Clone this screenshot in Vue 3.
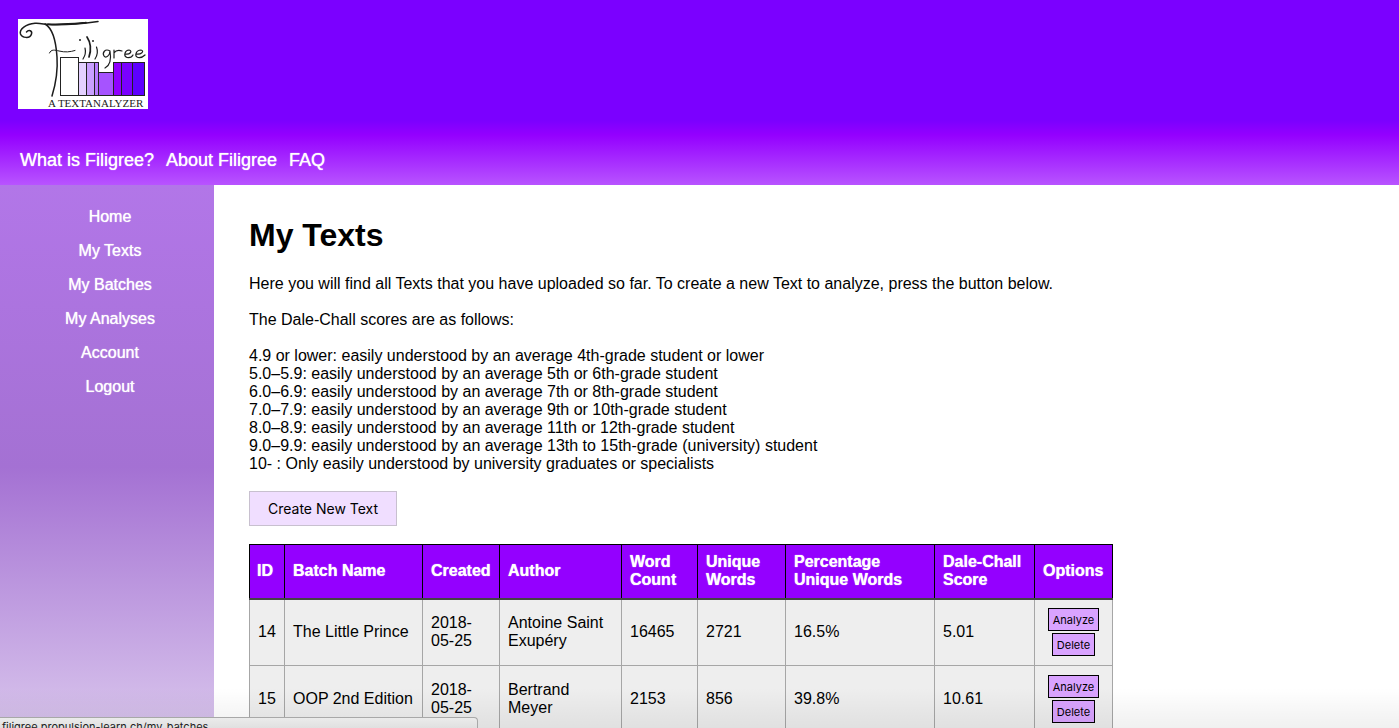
<script setup>
const topLinks = ['What is Filigree?', 'About Filigree', 'FAQ']
const sideLinks = ['Home', 'My Texts', 'My Batches', 'My Analyses', 'Account', 'Logout']
const scores = [
  '4.9 or lower: easily understood by an average 4th-grade student or lower',
  '5.0–5.9: easily understood by an average 5th or 6th-grade student',
  '6.0–6.9: easily understood by an average 7th or 8th-grade student',
  '7.0–7.9: easily understood by an average 9th or 10th-grade student',
  '8.0–8.9: easily understood by an average 11th or 12th-grade student',
  '9.0–9.9: easily understood by an average 13th to 15th-grade (university) student',
  '10- : Only easily understood by university graduates or specialists',
]
const columns = [
  { key: 'id', label: 'ID' },
  { key: 'name', label: 'Batch Name' },
  { key: 'created', label: 'Created' },
  { key: 'author', label: 'Author' },
  { key: 'words', label: 'Word Count' },
  { key: 'unique', label: 'Unique Words' },
  { key: 'percent', label: 'Percentage Unique Words' },
  { key: 'score', label: 'Dale-Chall Score' },
]
const texts = [
  { id: 14, name: 'The Little Prince', created: '2018-05-25', author: 'Antoine Saint Exupéry', words: 16465, unique: 2721, percent: '16.5%', score: '5.01' },
  { id: 15, name: 'OOP 2nd Edition', created: '2018-05-25', author: 'Bertrand Meyer', words: 2153, unique: 856, percent: '39.8%', score: '10.61' },
]
</script>

<template>
  <div class="page">
    <header class="banner">
      <a class="logo" href="#" aria-label="Filigree">
        <svg viewBox="0 0 130 90" width="130" height="90">
          <rect width="130" height="90" fill="#fff" />
          <g stroke="#222" stroke-width="1">
            <rect x="42.500" y="38.500" width="18" height="38" fill="#fff" />
            <rect x="60.500" y="43.500" width="8" height="33" fill="#e3d0ff" />
            <rect x="68.500" y="43.500" width="8" height="33" fill="#c9a0ff" />
            <rect x="76.500" y="43.500" width="4" height="33" fill="#b77cff" />
            <rect x="80.500" y="53.500" width="15" height="23" fill="#a653ff" />
            <rect x="95.500" y="43.500" width="8" height="33" fill="#8f00ff" />
            <rect x="103.500" y="43.500" width="11" height="33" fill="#7a00ff" />
            <rect x="114.500" y="43.500" width="12" height="33" fill="#5d00ff" />
          </g>
          <g fill="none" stroke="#1c1c1c" stroke-width="1.200" stroke-linecap="round" stroke-linejoin="round">
            <path d="M8.500 13C11 10 14.500 12 13.500 15C12 20 4 19 2.500 15C1 10 8 5 17 4.300C22 4 25 5 30 5.500C45 6.500 62 5 80 2.500" stroke-width="1.500" />
            <path d="M27 5C34 9 38 22 39 38C40 52 38 64 34 77" stroke-width="1.500" />
            <path d="M30 5.200C45 6 58 4.500 68 3.600" stroke-width="1.800" />
            <path d="M31.500 34C33 30 37 31 41 32C47 33.500 52 33 57 31.500" stroke-width="1" />
            <path d="M67 29C68 33 67 37 65 40" />
            <path d="M69 18C73 24 73 32 71 38" stroke-width="1.700" />
            <path d="M78.500 28C80 32 79 37 77 40" />
            <path d="M92 32C87 29 84 34 86 37C88 40 92 36 92 32C93 38 93 46 87 49" />
            <path d="M96 31V39M96 34C98 31 101 31 104 32" />
            <path d="M107 35C112 36 115 32 111 31C107 31 105 37 109 38.500C112 39 114 38 115 36" />
            <path d="M118 35C123 36 127 32 123 31C118 31 116 37 120 38.500C123 39 125 38 127 36" />
          </g>
          <g fill="#222"><circle cx="62" cy="21" r="1" /><circle cx="75" cy="22" r="1" /></g>
          <text x="30" y="88" font-family="Liberation Serif, serif" font-size="11" fill="#222">A TEXTANALYZER</text>
        </svg>
      </a>
      <nav class="top-nav">
        <a v-for="link in topLinks" :key="link" href="#">{{ link }}</a>
      </nav>
    </header>

    <div class="body">
      <nav class="side-nav">
        <a v-for="link in sideLinks" :key="link" href="#">{{ link }}</a>
      </nav>

      <main class="content">
        <h1>My Texts</h1>
        <p>Here you will find all Texts that you have uploaded so far. To create a new Text to analyze, press the button below.</p>
        <p>The Dale-Chall scores are as follows:</p>
        <ul class="scores">
          <li v-for="score in scores" :key="score">{{ score }}</li>
        </ul>
        <button class="create" type="button">Create New Text</button>

        <table>
          <thead>
            <tr>
              <th v-for="col in columns" :key="col.key" :class="col.key" scope="col">{{ col.label }}</th>
              <th class="options" scope="col">Options</th>
            </tr>
          </thead>
          <tbody>
            <tr v-for="row in texts" :key="row.id">
              <td v-for="col in columns" :key="col.key" :class="col.key">{{ row[col.key] }}</td>
              <td class="options">
                <div class="actions">
                  <button type="button">Analyze</button>
                  <button type="button">Delete</button>
                </div>
              </td>
            </tr>
          </tbody>
        </table>
      </main>
    </div>

    <div class="fade"></div>
    <div class="status">filigree.propulsion-learn.ch/my_batches</div>
  </div>
</template>

<style>
body {
  margin: 0;
}
</style>

<style scoped>
.page {
  position: relative;
  display: flex;
  flex-direction: column;
  height: 100vh;
  overflow: hidden;
  background: #fff;
  color: #000;
  font: 16px/18px "Liberation Sans", Arial, sans-serif;
}
.banner {
  flex: none;
  padding: 19px 18px 14px;
  background: linear-gradient(#7b00ff 0, #7b00ff 65%, #9400ff 73%, #b854ff 100%);
}
.logo {
  display: block;
  width: 130px;
}
.logo svg {
  display: block;
}
.top-nav {
  display: flex;
  gap: 12px;
  padding: 40px 2px 0;
  font-size: 18px;
  line-height: 22px;
}
.top-nav a,
.side-nav a {
  color: #fff;
  text-decoration: none;
  text-shadow: 0 0 1px #fff;
}
.body {
  flex: 1;
  display: flex;
  min-height: 0;
}
.side-nav {
  flex: none;
  box-sizing: border-box;
  width: 214px;
  display: flex;
  flex-direction: column;
  align-items: center;
  gap: 16px;
  padding: 23px 0 0 6px;
  background: linear-gradient(#b276e8 0, #a471d3 52%, #d8c4ec 100%);
}
.content {
  flex: 1;
  min-width: 0;
  padding: 32px 35px 0;
}
h1 {
  margin: 0 0 22px;
  font-size: 32px;
  line-height: 36px;
}
p {
  margin: 0 0 18px;
}
.scores {
  margin: 0 0 18px;
  padding: 0;
  list-style: none;
}
button {
  color: #000;
  font-family: Inter, sans-serif;
}
.create {
  display: block;
  height: 35px;
  margin-bottom: 18px;
  padding: 0 18px;
  border: 1px solid #c8c0cf;
  background: #f0deff;
  font-size: 14px;
}
table {
  width: 863px;
  table-layout: fixed;
  border-collapse: collapse;
}
th,
td {
  box-sizing: border-box;
  padding: 0 8px;
  text-align: left;
  vertical-align: middle;
}
th {
  height: 54px;
  border: 1px solid #000;
  border-bottom: 2px solid #444;
  background: #9400ff;
  color: #fff;
  text-shadow: 0 0 1px #fff;
}
td {
  height: 67px;
  border: 1px solid #a6a6a6;
  background: #eee;
}
.id { width: 35px; text-align: center; }
th.id { padding: 0; padding-right: 4px; }
.name { width: 138px; }
.created { width: 77px; }
.author { width: 122px; }
.words { width: 76px; }
.unique { width: 88px; }
.percent { width: 149px; }
.score { width: 100px; }
.options { width: 78px; }
.actions {
  display: flex;
  flex-direction: column;
  align-items: center;
  gap: 2px;
}
.actions button {
  height: 23px;
  padding: 0 4px;
  border: 1px solid #000;
  background: #d9a3ff;
  font-size: 11px;
}
.fade {
  position: absolute;
  right: 0;
  bottom: 0;
  left: 0;
  height: 40px;
  background: linear-gradient(transparent, rgba(0, 0, 0, 0.06));
  pointer-events: none;
}
.status {
  position: absolute;
  bottom: 0;
  left: 0;
  box-sizing: border-box;
  width: 478px;
  height: 11px;
  padding: 1px 2px 0;
  overflow: hidden;
  border: 1px solid #a8a8a8;
  border-width: 1px 1px 0 0;
  border-radius: 0 4px 0 0;
  background: linear-gradient(#ebebeb, #e0e0e0);
  color: #222;
  font: 11px/16px Inter, sans-serif;
}
</style>
